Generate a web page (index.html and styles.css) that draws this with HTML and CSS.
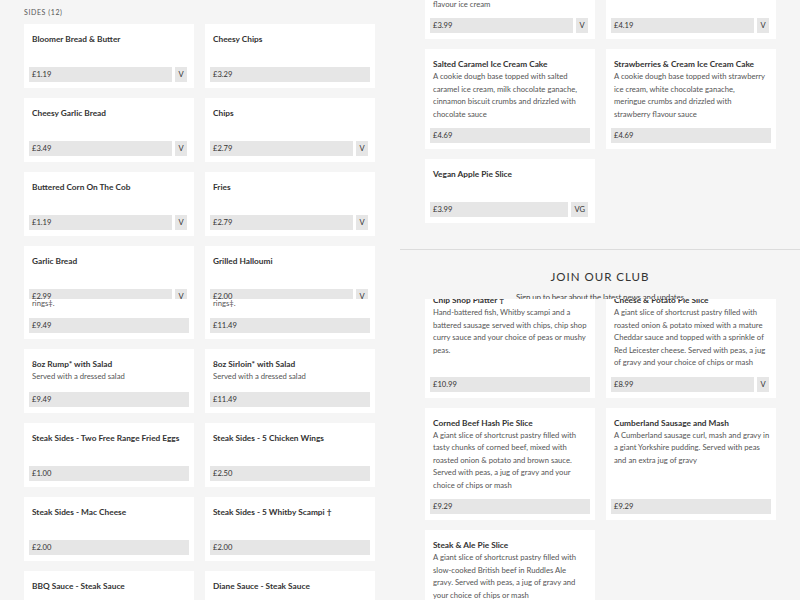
FILE: index.html
```html
<!DOCTYPE html>
<html lang="en">
<head>
<meta charset="utf-8">
<title>Menu</title>
<link rel="stylesheet" href="styles.css">
</head>
<body>
<div class="board">

  <section class="tile tile-tl">
    <div class="menu">
      <h2 class="cat">Sides (12)</h2>
      <div class="grid">
        <div class="card"><h3 class="title">Bloomer Bread &amp; Butter</h3><div class="price-row"><span class="price">£1.19</span><span class="tag">V</span></div></div>
        <div class="card"><h3 class="title">Cheesy Chips</h3><div class="price-row"><span class="price">£3.29</span></div></div>
        <div class="card"><h3 class="title">Cheesy Garlic Bread</h3><div class="price-row"><span class="price">£3.49</span><span class="tag">V</span></div></div>
        <div class="card"><h3 class="title">Chips</h3><div class="price-row"><span class="price">£2.79</span><span class="tag">V</span></div></div>
        <div class="card"><h3 class="title">Buttered Corn On The Cob</h3><div class="price-row"><span class="price">£1.19</span><span class="tag">V</span></div></div>
        <div class="card"><h3 class="title">Fries</h3><div class="price-row"><span class="price">£2.79</span><span class="tag">V</span></div></div>
        <div class="card"><h3 class="title">Garlic Bread</h3><div class="price-row"><span class="price">£2.99</span><span class="tag">V</span></div></div>
        <div class="card"><h3 class="title">Grilled Halloumi</h3><div class="price-row"><span class="price">£2.00</span><span class="tag">V</span></div></div>
      </div>
    </div>
  </section>

  <section class="tile tile-tr">
    <div class="menu">
      <div class="grid grid-cut-a">
        <div class="card"><h3 class="title">Mint Choc Chip Ice Cream Cake</h3><p class="desc">A cookie dough base topped with mint<br>choc chip ice cream, chocolate sauce and<br>flavour ice cream</p><div class="price-row"><span class="price">£3.99</span><span class="tag">V</span></div></div>
        <div class="card"><h3 class="title">Chocolate Fudge Cake</h3><p class="desc">Served warm with vanilla ice cream</p><div class="price-row"><span class="price">£4.19</span><span class="tag">V</span></div></div>
        <div class="card"><h3 class="title">Salted Caramel Ice Cream Cake</h3><p class="desc">A cookie dough base topped with salted<br>caramel ice cream, milk chocolate ganache,<br>cinnamon biscuit crumbs and drizzled with<br>chocolate sauce</p><div class="price-row"><span class="price">£4.69</span></div></div>
        <div class="card"><h3 class="title">Strawberries &amp; Cream Ice Cream Cake</h3><p class="desc">A cookie dough base topped with strawberry<br>ice cream, white chocolate ganache,<br>meringue crumbs and drizzled with<br>strawberry flavour sauce</p><div class="price-row"><span class="price">£4.69</span></div></div>
        <div class="card"><h3 class="title">Vegan Apple Pie Slice</h3><div class="price-row"><span class="price">£3.99</span><span class="tag">VG</span></div></div>
      </div>
    </div>
    <div class="club">
      <h2 class="club-title">JOIN OUR CLUB</h2>
      <p class="club-text">Sign up to hear about the latest news and updates</p>
    </div>
  </section>

  <section class="tile tile-bl">
    <div class="menu">
      <div class="grid grid-cut-c">
        <div class="card"><h3 class="title">8oz Rump* Steak</h3><p class="desc">Served with chips, grilled tomato,<br>mushroom, peas and crispy onion<br>rings‡.</p><div class="price-row"><span class="price">£9.49</span></div></div>
        <div class="card"><h3 class="title">8oz Sirloin* Steak</h3><p class="desc">Served with chips, grilled tomato,<br>mushroom, peas and crispy onion<br>rings‡.</p><div class="price-row"><span class="price">£11.49</span></div></div>
        <div class="card"><h3 class="title">8oz Rump* with Salad</h3><p class="desc">Served with a dressed salad</p><div class="price-row"><span class="price">£9.49</span></div></div>
        <div class="card"><h3 class="title">8oz Sirloin* with Salad</h3><p class="desc">Served with a dressed salad</p><div class="price-row"><span class="price">£11.49</span></div></div>
        <div class="card"><h3 class="title">Steak Sides - Two Free Range Fried Eggs</h3><div class="price-row"><span class="price">£1.00</span></div></div>
        <div class="card"><h3 class="title">Steak Sides - 5 Chicken Wings</h3><div class="price-row"><span class="price">£2.50</span></div></div>
        <div class="card"><h3 class="title">Steak Sides - Mac Cheese</h3><div class="price-row"><span class="price">£2.00</span></div></div>
        <div class="card"><h3 class="title">Steak Sides - 5 Whitby Scampi †</h3><div class="price-row"><span class="price">£2.00</span></div></div>
        <div class="card"><h3 class="title">BBQ Sauce - Steak Sauce</h3><div class="price-row"><span class="price">£0.50</span></div></div>
        <div class="card"><h3 class="title">Diane Sauce - Steak Sauce</h3><div class="price-row"><span class="price">£0.50</span></div></div>
      </div>
    </div>
  </section>

  <section class="tile tile-br">
    <div class="menu">
      <div class="grid grid-cut-b">
        <div class="card"><h3 class="title">Chip Shop Platter †</h3><p class="desc">Hand-battered fish, Whitby scampi and a<br>battered sausage served with chips, chip shop<br>curry sauce and your choice of peas or mushy<br>peas.</p><div class="price-row"><span class="price">£10.99</span></div></div>
        <div class="card"><h3 class="title">Cheese &amp; Potato Pie Slice</h3><p class="desc">A giant slice of shortcrust pastry filled with<br>roasted onion &amp; potato mixed with a mature<br>Cheddar sauce and topped with a sprinkle of<br>Red Leicester cheese. Served with peas, a jug<br>of gravy and your choice of chips or mash</p><div class="price-row"><span class="price">£8.99</span><span class="tag">V</span></div></div>
        <div class="card"><h3 class="title">Corned Beef Hash Pie Slice</h3><p class="desc">A giant slice of shortcrust pastry filled with<br>tasty chunks of corned beef, mixed with<br>roasted onion &amp; potato and brown sauce.<br>Served with peas, a jug of gravy and your<br>choice of chips or mash</p><div class="price-row"><span class="price">£9.29</span></div></div>
        <div class="card"><h3 class="title">Cumberland Sausage and Mash</h3><p class="desc">A Cumberland sausage curl, mash and gravy in<br>a giant Yorkshire pudding. Served with peas<br>and an extra jug of gravy</p><div class="price-row"><span class="price">£9.29</span></div></div>
        <div class="card"><h3 class="title">Steak &amp; Ale Pie Slice</h3><p class="desc">A giant slice of shortcrust pastry filled with<br>slow-cooked British beef in Ruddles Ale<br>gravy. Served with peas, a jug of gravy and<br>your choice of chips or mash</p><div class="price-row"><span class="price">£9.29</span></div></div>
      </div>
    </div>
  </section>

</div>
</body>
</html>
```

FILE: styles.css
```css
* { box-sizing: border-box; }

html, body {
  margin: 0;
  padding: 0;
  background: #f5f5f5;
}

body {
  font-family: Lato, "Open Sans", sans-serif;
  color: #333;
}

.board {
  display: grid;
  grid-template-columns: 400px 400px;
  grid-template-rows: 299px 301px;
  width: 800px;
  height: 600px;
  overflow: hidden;
}

.tile {
  overflow: hidden;
  background: #f5f5f5;
}

.tile-tl .menu { padding: 6px 0 0 24px; }
.tile-bl .menu { padding-left: 24px; }
.tile-tr .menu,
.tile-br .menu { padding-left: 25px; }

.tile-tr .menu { padding-bottom: 26px; }

.cat {
  margin: 0 0 6px;
  font-size: 7px;
  line-height: 12px;
  font-weight: 400;
  letter-spacing: 0.6px;
  text-transform: uppercase;
  color: #555;
}

.grid {
  display: grid;
  grid-template-columns: 170px 170px;
  column-gap: 11px;
  row-gap: 10px;
}

.grid-cut-a { margin-top: -48.5px; }
.grid-cut-b { margin-top: -14px; }
.grid-cut-c { margin-top: -48px; }

.card {
  background: #fff;
  padding: 9px 8px 6px;
  min-height: 64px;
  display: flex;
  flex-direction: column;
}

.title {
  margin: 0;
  font-size: 8.3px;
  line-height: 12px;
  font-weight: 700;
  color: #333;
}

.desc {
  margin: 0 0 8px;
  font-size: 7.7px;
  line-height: 12.5px;
  color: #555;
  white-space: nowrap;
}

.price-row {
  margin: auto -3px 0;
  display: flex;
  gap: 3px;
  height: 15px;
}

.price {
  flex: 1;
  background: #e6e6e6;
  padding-left: 3px;
  font-size: 7.6px;
  line-height: 15px;
  color: #333;
}

.tag {
  background: #e6e6e6;
  min-width: 12px;
  padding: 0 3px;
  margin-right: 2px;
  text-align: center;
  font-size: 7.6px;
  line-height: 15px;
  color: #333;
}

.club {
  border-top: 1px solid #dcdcdc;
  text-align: center;
  padding-top: 19px;
}

.club-title {
  margin: 0;
  font-size: 11.5px;
  line-height: 16px;
  font-weight: 400;
  letter-spacing: 1px;
  color: #333;
}

.club-text {
  margin: 6px 0 0;
  font-size: 8px;
  line-height: 12px;
  letter-spacing: -0.15px;
  color: #444;
}
```
